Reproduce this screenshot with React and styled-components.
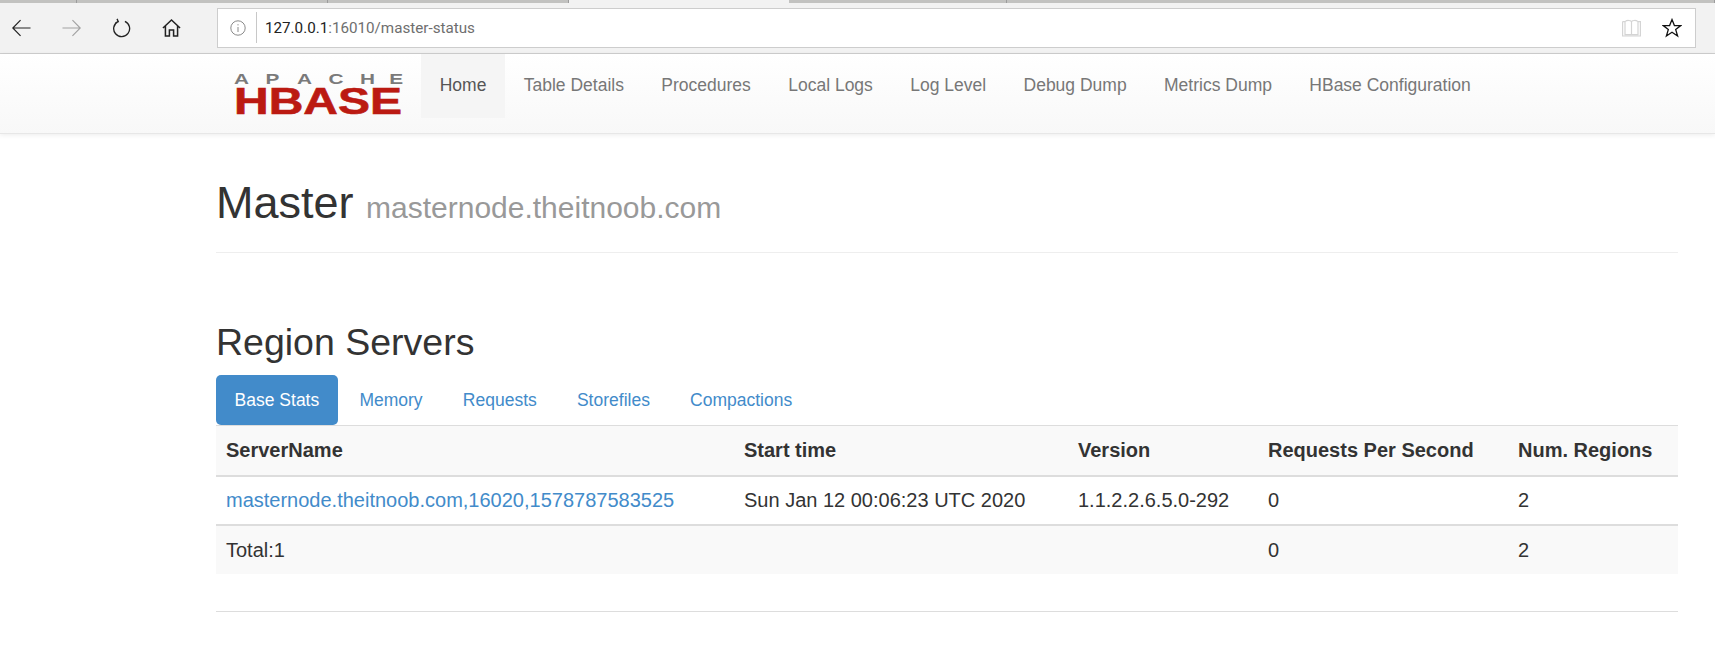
import styled, { createGlobalStyle } from "styled-components";

const GlobalStyle = createGlobalStyle`
  html, body {
    margin: 0;
    padding: 0;
    background: #fff;
    font-family: "Liberation Sans", Arial, sans-serif;
    color: #333;
  }
  * {
    box-sizing: border-box;
  }
`;

const TABS = ["Base Stats", "Memory", "Requests", "Storefiles", "Compactions"];
const NAV = [
  "Home",
  "Table Details",
  "Procedures",
  "Local Logs",
  "Log Level",
  "Debug Dump",
  "Metrics Dump",
  "HBase Configuration",
];

const BackIcon = () => (
  <svg width="20" height="18" viewBox="0 0 20 18" fill="none" stroke="#222" strokeWidth="1.3">
    <path d="M19.5 9H1M9 .7 .8 9 9 17.3" />
  </svg>
);

const ForwardIcon = () => (
  <svg width="20" height="18" viewBox="0 0 20 18" fill="none" stroke="#a2a2a2" strokeWidth="1.2">
    <path d="M.5 9H19M11 .7 19.2 9 11 17.3" />
  </svg>
);

const ReloadIcon = () => (
  <svg width="20" height="20" viewBox="0 0 20 20" fill="none" stroke="#222" strokeWidth="1.4">
    <path d="M6.3 3.2A8.4 8.4 0 1 0 13.6 3M5.3 .4 6.6 3.4 3.6 4.7" />
  </svg>
);

const HomeIcon = () => (
  <svg width="20" height="20" viewBox="0 0 20 20" fill="none" stroke="#222" strokeWidth="1.6">
    <path d="M1 10 10 1.5 19 10M3.6 8V18.5H7.8V12.2H12.2V18.5H16.4V8" />
  </svg>
);

const InfoIcon = () => (
  <svg width="16" height="16" viewBox="0 0 16 16" fill="none" stroke="#8a8a8a" strokeWidth="1">
    <circle cx="8" cy="8" r="7.2" />
    <path d="M8 7V12M8 4.2V5.4" />
  </svg>
);

const BookIcon = () => (
  <svg width="19" height="18" viewBox="0 0 19 18" fill="none" stroke="#d4d4d4" strokeWidth="1.2">
    <path d="M.6 2.6H3V15.6H9.5V2.6C8.5 1.2 5 1 3 2.6M9.5 2.6C10.5 1.2 14 1 16 2.6H18.4V17H.6V2.6M16 2.6V15.6H9.5" />
  </svg>
);

const StarIcon = () => (
  <svg width="20" height="20" viewBox="0 0 20 20" fill="none" stroke="#111" strokeWidth="1.3">
    <path d="M10 1.6 12.4 7.6H18.8L13.7 11.6 15.6 18 10 14.3 4.4 18 6.3 11.6 1.2 7.6H7.6Z" />
  </svg>
);

const HBaseLogo = () => (
  <svg width="168" height="41" viewBox="0 0 168 41" style={{ overflow: "visible" }}>
    <text
      transform="scale(1.35 1)"
      x="0 23.3 46.6 70 93.3 115"
      y="11"
      fontFamily="'Liberation Sans', sans-serif"
      fontSize="15.4"
      fontWeight="700"
      fill="#7a7a7a"
    >
      APACHE
    </text>
    <text
      x="0"
      y="40.5"
      fontFamily="'Liberation Sans', sans-serif"
      fontSize="36"
      fontWeight="700"
      fill="#bb1a12"
      stroke="#bb1a12"
      strokeWidth=".6"
      textLength="168"
      lengthAdjust="spacingAndGlyphs"
    >
      HBASE
    </text>
  </svg>
);

const App = () => (
  <>
    <GlobalStyle />
    <TabStrip>
      <StripTab $width={77} />
      <StripTab $width={251} />
      <StripTab $width={241} />
      <StripTab $width={220} $active />
      <StripTab $width={218} />
      <StripTab $flex />
    </TabStrip>
    <Toolbar>
      <ToolButton $width={19}>
        <BackIcon />
      </ToolButton>
      <ToolButton $width={19} $left={31}>
        <ForwardIcon />
      </ToolButton>
      <ToolButton $width={19} $left={31}>
        <ReloadIcon />
      </ToolButton>
      <ToolButton $width={19} $left={31}>
        <HomeIcon />
      </ToolButton>
      <AddressBar>
        <InfoIcon />
        <AddressDivider />
        <Url>
          127.0.0.1<UrlRest>:16010/master-status</UrlRest>
        </Url>
        <AddressIcons>
          <BookIcon />
          <StarIcon />
        </AddressIcons>
      </AddressBar>
    </Toolbar>
    <Navbar>
      <LogoWrap>
        <HBaseLogo />
      </LogoWrap>
      <NavList>
        {NAV.map((item, i) => (
          <NavItem key={item} $active={i === 0}>
            {item}
          </NavItem>
        ))}
      </NavList>
    </Navbar>
    <Container>
      <PageHeader>
        <Title>
          Master <Small>masternode.theitnoob.com</Small>
        </Title>
      </PageHeader>
      <SectionTitle>Region Servers</SectionTitle>
      <Pills>
        {TABS.map((tab, i) => (
          <Pill key={tab} $active={i === 0}>
            {tab}
          </Pill>
        ))}
      </Pills>
      <Table>
        <colgroup>
          <col style={{ width: 518 }} />
          <col style={{ width: 334 }} />
          <col style={{ width: 190 }} />
          <col style={{ width: 250 }} />
          <col style={{ width: 170 }} />
        </colgroup>
        <thead>
          <Row $shaded>
            <HeadCell>ServerName</HeadCell>
            <HeadCell>Start time</HeadCell>
            <HeadCell>Version</HeadCell>
            <HeadCell>Requests Per Second</HeadCell>
            <HeadCell>Num. Regions</HeadCell>
          </Row>
        </thead>
        <tbody>
          <Row>
            <Cell>
              <ServerLink>masternode.theitnoob.com,16020,1578787583525</ServerLink>
            </Cell>
            <Cell>Sun Jan 12 00:06:23 UTC 2020</Cell>
            <Cell>1.1.2.2.6.5.0-292</Cell>
            <Cell>0</Cell>
            <Cell>2</Cell>
          </Row>
          <Row $shaded>
            <Cell $foot>Total:1</Cell>
            <Cell $foot />
            <Cell $foot />
            <Cell $foot>0</Cell>
            <Cell $foot>2</Cell>
          </Row>
        </tbody>
      </Table>
      <Rule />
    </Container>
  </>
);

export default App;

const TabStrip = styled.div`
  display: flex;
  height: 3px;
  background: #f2f2f2;
`;

const StripTab = styled.div`
  width: ${(p) => (p.$width ? `${p.$width}px` : "auto")};
  flex: ${(p) => (p.$flex ? 1 : "none")};
  background: ${(p) => (p.$active ? "#f2f2f2" : "#c2c2c0")};
  border-right: ${(p) => (p.$active ? "none" : "1px solid #9c9c9c")};
`;

const Toolbar = styled.div`
  display: flex;
  align-items: center;
  height: 51px;
  padding: 0 19px 1px 12px;
  background: #f2f2f2;
  border-bottom: 1px solid #cfcfcf;
`;

const ToolButton = styled.div`
  display: flex;
  justify-content: center;
  width: ${(p) => p.$width}px;
  margin-left: ${(p) => p.$left || 0}px;
`;

const AddressBar = styled.div`
  display: flex;
  align-items: center;
  flex: 1;
  height: 40px;
  margin-left: 36px;
  padding: 0 13px 0 12px;
  background: #fff;
  border: 1px solid #cdcdcd;
`;

const AddressDivider = styled.div`
  width: 1px;
  height: 31px;
  margin: 0 8px 0 10px;
  background: #c8c8c8;
`;

const Url = styled.div`
  font-family: Roboto, sans-serif;
  font-size: 15.2px;
  color: #222;
`;

const UrlRest = styled.span`
  color: #6e6e6e;
`;

const AddressIcons = styled.div`
  display: flex;
  align-items: center;
  gap: 21px;
  margin-left: auto;
`;

const Navbar = styled.div`
  display: flex;
  height: 80px;
  padding-left: 234px;
  background: linear-gradient(to bottom, #fff 0, #f8f8f8 100%);
  border-bottom: 1px solid #e7e7e7;
  box-shadow: 0 1px 5px rgba(0, 0, 0, 0.08);
`;

const LogoWrap = styled.div`
  width: 187px;
  padding-top: 19px;
`;

const NavList = styled.div`
  display: flex;
  align-items: flex-start;
`;

const NavItem = styled.div`
  height: 64px;
  line-height: 62px;
  padding: 0 18.7px;
  font-size: 17.5px;
  color: ${(p) => (p.$active ? "#555" : "#777")};
  background: ${(p) => (p.$active ? "#f5f5f5" : "transparent")};
`;

const Container = styled.div`
  width: 1462px;
  margin-left: 216px;
`;

const PageHeader = styled.div`
  height: 119px;
  padding-top: 44px;
  border-bottom: 1px solid #eee;
`;

const Title = styled.div`
  font-size: 45px;
  line-height: 50px;
  color: #333;
`;

const Small = styled.span`
  font-size: 30px;
  color: #999;
`;

const SectionTitle = styled.div`
  margin-top: 69px;
  font-size: 37.5px;
  line-height: 40px;
  color: #333;
`;

const Pills = styled.div`
  display: flex;
  gap: 3px;
  margin-top: 13px;
`;

const Pill = styled.div`
  height: 50px;
  line-height: 50px;
  padding: 0 18.6px;
  font-size: 17.5px;
  border-radius: 5px;
  color: ${(p) => (p.$active ? "#fff" : "#428bca")};
  background: ${(p) => (p.$active ? "#428bca" : "transparent")};
`;

const Table = styled.table`
  width: 100%;
  table-layout: fixed;
  border-collapse: collapse;
  font-size: 20px;
  color: #333;
`;

const Row = styled.tr`
  background: ${(p) => (p.$shaded ? "#f9f9f9" : "#fff")};
`;

const HeadCell = styled.th`
  height: 50px;
  padding: 0 10px;
  text-align: left;
  font-weight: 700;
  border-top: 1px solid #ddd;
  border-bottom: 2px solid #ddd;
`;

const Cell = styled.td`
  height: 49px;
  padding: ${(p) => (p.$foot ? "2px" : "0")} 10px 0;
  border-top: ${(p) => (p.$foot ? "2px" : "1px")} solid #ddd;
`;

const ServerLink = styled.span`
  color: #428bca;
`;

const Rule = styled.div`
  height: 1px;
  margin-top: 37px;
  background: #ddd;
`;
